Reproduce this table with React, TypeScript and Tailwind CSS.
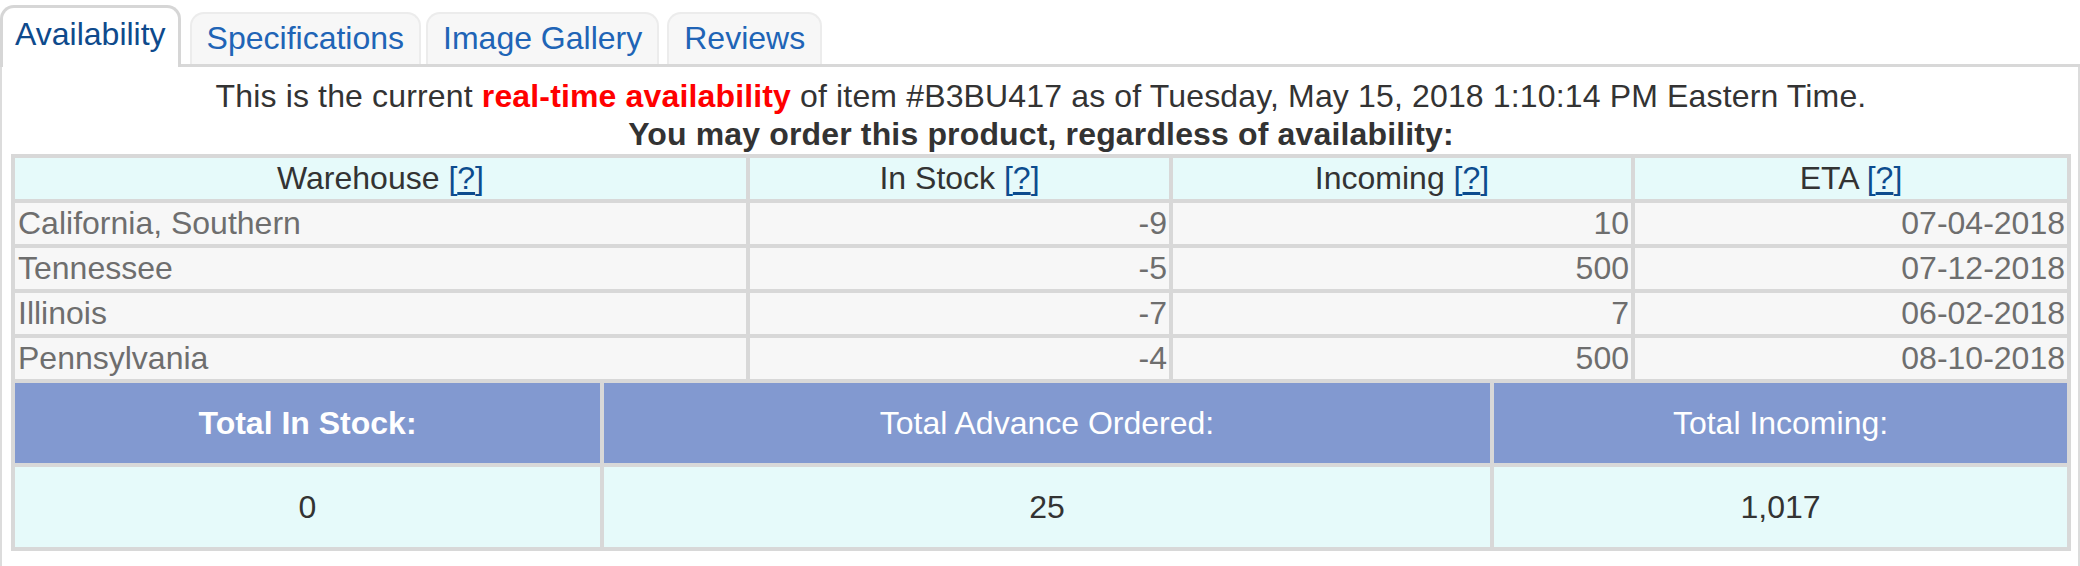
import React from "react";

const rows = [
  { w: "California, Southern", s: "-9", i: "10", e: "07-04-2018" },
  { w: "Tennessee", s: "-5", i: "500", e: "07-12-2018" },
  { w: "Illinois", s: "-7", i: "7", e: "06-02-2018" },
  { w: "Pennsylvania", s: "-4", i: "500", e: "08-10-2018" },
];

function Help() {
  return (
    <span className="text-[#0c4c8e]">
      [<span className="underline underline-offset-[3px]">?</span>]
    </span>
  );
}

export default function App() {
  return (
    <div className="w-[2080px] h-[566px] overflow-hidden bg-white font-['Liberation_Sans',Arial,sans-serif] text-[32px] leading-[37px]">
      {/* Tabs */}
      <div className="flex items-end pt-[5px] border-b-[3px] border-[#d8d8d8]">
        <div className="h-[62px] -mb-[3px] bg-white border-[3px] border-b-0 border-[#d6d6d6] rounded-t-[14px] px-[12px] pt-[8px] text-[#0e4a8c]">
          Availability
        </div>
        <div className="ml-[9px] h-[52px] bg-[#f7f7f7] border-2 border-b-0 border-[#ececec] rounded-t-[14px] px-[15px] pt-[6px] text-[#2064b6]">
          Specifications
        </div>
        <div className="ml-[5px] h-[52px] bg-[#f7f7f7] border-2 border-b-0 border-[#ececec] rounded-t-[14px] px-[15px] pt-[6px] text-[#2064b6]">
          Image Gallery
        </div>
        <div className="ml-[8px] h-[52px] bg-[#f7f7f7] border-2 border-b-0 border-[#ececec] rounded-t-[14px] px-[15px] pt-[6px] text-[#2064b6]">
          Reviews
        </div>
      </div>

      {/* Panel */}
      <div className="h-[499px] border-l-2 border-r-2 border-[#dcdcdc] pl-[9px] pr-[7px] pt-[10px]">
        <div className="text-center text-[#333333] leading-[38px] tracking-[0.15px]">
          <div>
            This is the current{" "}
            <span className="font-bold text-[#ff0000]">real-time availability</span> of item #B3BU417 as of
            Tuesday, May 15, 2018 1:10:14 PM Eastern Time.
          </div>
          <div className="font-bold">You may order this product, regardless of availability:</div>
        </div>

        <div className="mt-[1px] bg-[#d8d8d8] p-[4px] flex flex-col gap-[4px]">
          <div className="grid grid-cols-[731fr_419fr_458fr_432fr] gap-[4px]">
            <div className="bg-[#e6fafa] text-center text-[#333333] py-[2px]">
              Warehouse <Help />
            </div>
            <div className="bg-[#e6fafa] text-center text-[#333333] py-[2px]">
              In Stock <Help />
            </div>
            <div className="bg-[#e6fafa] text-center text-[#333333] py-[2px]">
              Incoming <Help />
            </div>
            <div className="bg-[#e6fafa] text-center text-[#333333] py-[2px]">
              ETA <Help />
            </div>
            {rows.map((r) => (
              <React.Fragment key={r.w}>
                <div className="bg-[#f7f7f7] text-[#6e6e6e] py-[2px] pl-[3px]">{r.w}</div>
                <div className="bg-[#f7f7f7] text-[#6e6e6e] py-[2px] pr-[2px] text-right">{r.s}</div>
                <div className="bg-[#f7f7f7] text-[#6e6e6e] py-[2px] pr-[2px] text-right">{r.i}</div>
                <div className="bg-[#f7f7f7] text-[#6e6e6e] py-[2px] pr-[2px] text-right">{r.e}</div>
              </React.Fragment>
            ))}
          </div>
          <div className="grid grid-cols-[585fr_886fr_573fr] gap-[4px]">
            <div className="h-[80px] bg-[#8299d0] text-white font-bold flex items-center justify-center">
              Total In Stock:
            </div>
            <div className="h-[80px] bg-[#8299d0] text-white flex items-center justify-center">
              Total Advance Ordered:
            </div>
            <div className="h-[80px] bg-[#8299d0] text-white flex items-center justify-center">
              Total Incoming:
            </div>
            <div className="h-[80px] bg-[#e6fafa] text-[#333333] flex items-center justify-center">0</div>
            <div className="h-[80px] bg-[#e6fafa] text-[#333333] flex items-center justify-center">25</div>
            <div className="h-[80px] bg-[#e6fafa] text-[#333333] flex items-center justify-center">1,017</div>
          </div>
        </div>
      </div>
    </div>
  );
}
